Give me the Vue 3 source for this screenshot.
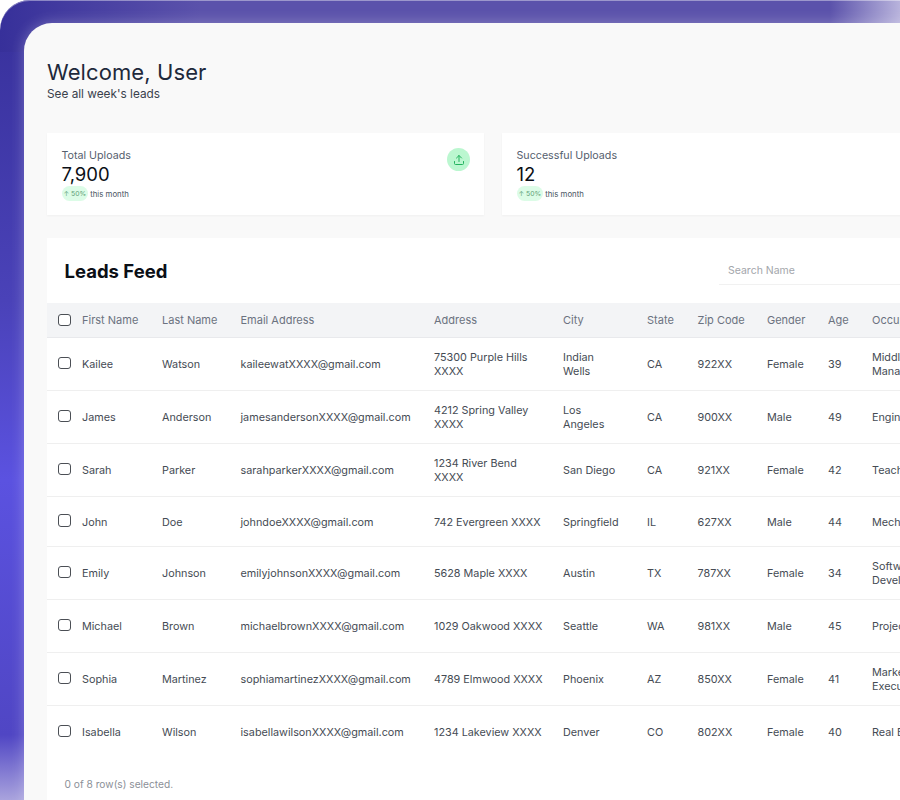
<script setup>
const columns = [
  "First Name",
  "Last Name",
  "Email Address",
  "Address",
  "City",
  "State",
  "Zip Code",
  "Gender",
  "Age",
  "Occupation",
];

const leads = [
  { first: "Kailee", last: "Watson", email: "kaileewatXXXX@gmail.com", address: "75300 Purple Hills XXXX", city: "Indian Wells", state: "CA", zip: "922XX", gender: "Female", age: 39, job: "Middle Manager" },
  { first: "James", last: "Anderson", email: "jamesandersonXXXX@gmail.com", address: "4212 Spring Valley XXXX", city: "Los Angeles", state: "CA", zip: "900XX", gender: "Male", age: 49, job: "Engineer" },
  { first: "Sarah", last: "Parker", email: "sarahparkerXXXX@gmail.com", address: "1234 River Bend XXXX", city: "San Diego", state: "CA", zip: "921XX", gender: "Female", age: 42, job: "Teacher" },
  { first: "John", last: "Doe", email: "johndoeXXXX@gmail.com", address: "742 Evergreen XXXX", city: "Springfield", state: "IL", zip: "627XX", gender: "Male", age: 44, job: "Mechanic", short: true },
  { first: "Emily", last: "Johnson", email: "emilyjohnsonXXXX@gmail.com", address: "5628 Maple XXXX", city: "Austin", state: "TX", zip: "787XX", gender: "Female", age: 34, job: "Software Developer" },
  { first: "Michael", last: "Brown", email: "michaelbrownXXXX@gmail.com", address: "1029 Oakwood XXXX", city: "Seattle", state: "WA", zip: "981XX", gender: "Male", age: 45, job: "Project Lead" },
  { first: "Sophia", last: "Martinez", email: "sophiamartinezXXXX@gmail.com", address: "4789 Elmwood XXXX", city: "Phoenix", state: "AZ", zip: "850XX", gender: "Female", age: 41, job: "Marketing Executive" },
  { first: "Isabella", last: "Wilson", email: "isabellawilsonXXXX@gmail.com", address: "1234 Lakeview XXXX", city: "Denver", state: "CO", zip: "802XX", gender: "Female", age: 40, job: "Real Estate" },
];

const stats = [
  { label: "Total Uploads", value: "7,900", icon: true },
  { label: "Successful Uploads", value: "12", icon: false },
];
</script>

<template>
  <div class="frame">
    <main class="panel">
      <h1>Welcome, User</h1>
      <p class="sub">See all week's leads</p>

      <section class="stats">
        <div v-for="s in stats" :key="s.label" class="stat">
          <div>
            <div class="stat-label">{{ s.label }}</div>
            <div class="stat-value">{{ s.value }}</div>
            <div class="stat-trend">
              <span class="pill">↑ 50%</span>
              <span>this month</span>
            </div>
          </div>
          <span v-if="s.icon" class="stat-icon">
            <svg width="12" height="12" viewBox="0 0 24 24" fill="none" stroke="currentColor" stroke-width="2" stroke-linecap="round" stroke-linejoin="round">
              <path d="M21 15v4a2 2 0 0 1-2 2H5a2 2 0 0 1-2-2v-4" />
              <polyline points="17 8 12 3 7 8" />
              <line x1="12" y1="3" x2="12" y2="15" />
            </svg>
          </span>
        </div>
      </section>

      <section class="feed">
        <div class="feed-head">
          <h2>Leads Feed</h2>
          <input class="search" placeholder="Search Name" />
        </div>
        <table>
          <colgroup>
            <col class="c-check" />
            <col class="c-first" />
            <col class="c-last" />
            <col class="c-email" />
            <col class="c-address" />
            <col class="c-city" />
            <col class="c-state" />
            <col class="c-zip" />
            <col class="c-gender" />
            <col class="c-age" />
            <col class="c-job" />
          </colgroup>
          <thead>
            <tr>
              <th><span class="box"></span></th>
              <th v-for="c in columns" :key="c">{{ c }}</th>
            </tr>
          </thead>
          <tbody>
            <tr v-for="l in leads" :key="l.email" :class="{ short: l.short }">
              <td><span class="box"></span></td>
              <td>{{ l.first }}</td>
              <td>{{ l.last }}</td>
              <td>{{ l.email }}</td>
              <td class="wrap-address">{{ l.address }}</td>
              <td class="wrap-city">{{ l.city }}</td>
              <td>{{ l.state }}</td>
              <td>{{ l.zip }}</td>
              <td>{{ l.gender }}</td>
              <td>{{ l.age }}</td>
              <td class="wrap-job">{{ l.job }}</td>
            </tr>
          </tbody>
        </table>
        <p class="selected">0 of 8 row(s) selected.</p>
      </section>
    </main>
  </div>
</template>

<style scoped>
* {
  box-sizing: border-box;
}

.frame {
  position: relative;
  width: 900px;
  height: 800px;
  overflow: hidden;
  padding: 22.5px 0 0 24px;
  border-top-left-radius: 30px;
  font-family: Inter, "Liberation Sans", sans-serif;
  background:
    linear-gradient(90deg, #37309a 0, #5b52ab 200px, #5b52ab 830px, #b8b3dc 900px) top / 100% 52px no-repeat,
    linear-gradient(180deg, #37309a 0, #4a42b8 300px, #5b52e0 480px, #5046c4 735px, #a9a3dd 800px) left / 52px 100% no-repeat;
}

/* thin light edge along the top of the frame */
.frame::after {
  content: "";
  position: absolute;
  inset: 0;
  border-top-left-radius: 30px;
  box-shadow: inset 0 1px 0 rgba(255, 255, 255, 0.4);
  pointer-events: none;
}

.panel {
  width: 1100px;
  height: 900px;
  padding: 36.5px 0 0 23px;
  background: #f9f9f9;
  border-top-left-radius: 28px;
  box-shadow: 0 0 14px rgba(255, 255, 255, 0.28);
}

h1 {
  margin: 0;
  font-size: 22px;
  line-height: 27px;
  font-weight: 400;
  letter-spacing: 0.1px;
  color: #1e293b;
}

.sub {
  margin: 0;
  font-size: 11.8px;
  line-height: 16px;
  color: #3a414c;
}

.stats {
  display: flex;
  gap: 18px;
  margin-top: 31px;
}

.stat {
  display: flex;
  justify-content: space-between;
  width: 437px;
  height: 82px;
  padding: 16px 14px 0 14.5px;
  background: #fff;
  box-shadow: 0 1px 2px rgba(0, 0, 0, 0.04);
}

.stat:last-child {
  width: 600px;
}

.stat-label {
  font-size: 10.7px;
  line-height: 14px;
  color: #55606e;
}

.stat-value {
  font-size: 18.5px;
  line-height: 23px;
  color: #0b0f16;
}

.stat-trend {
  display: flex;
  align-items: center;
  gap: 2px;
  font-size: 7.8px;
  color: #4b5563;
}

.pill {
  padding: 3px 2px;
  border-radius: 8px;
  font-size: 6.8px;
  line-height: 9px;
  color: #5f9f78;
  background: #dcfce7;
}

.stat-icon {
  display: flex;
  align-items: center;
  justify-content: center;
  width: 23px;
  height: 23px;
  margin-top: -1px;
  border-radius: 50%;
  color: #22b35e;
  background: #bbf7d0;
}

.feed {
  width: 1100px;
  margin-top: 23px;
  background: #fff;
}

.feed-head {
  display: flex;
  align-items: center;
  justify-content: space-between;
  height: 65px;
  padding-left: 17.5px;
  padding-right: 128px;
}

h2 {
  margin: 0;
  font-size: 18.5px;
  font-weight: 700;
  color: #0b0f16;
}

.search {
  width: 300px;
  height: 29px;
  padding: 0 9px;
  border: 0;
  border-bottom: 1px solid #f1f1f1;
  outline: 0;
  font: inherit;
  font-size: 10.5px;
  background: transparent;
}

.search::placeholder {
  color: #a3a6ab;
}

table {
  width: 913px;
  table-layout: fixed;
  border-collapse: collapse;
  font-size: 10.8px;
  line-height: 14.5px;
  color: #454b54;
}

.c-check { width: 35px; }
.c-first { width: 80px; }
.c-last { width: 78.5px; }
.c-email { width: 193.5px; }
.c-address { width: 129px; }
.c-city { width: 84px; }
.c-state { width: 50.5px; }
.c-zip { width: 69.5px; }
.c-gender { width: 61px; }
.c-age { width: 44px; }
.c-job { width: 88px; }

th {
  height: 34px;
  padding: 0 8px 0 0;
  font-size: 11px;
  font-weight: 400;
  text-align: left;
  white-space: nowrap;
  color: #6b7280;
  background: #f3f4f6;
  border-bottom: 1px solid #e8e9ec;
}

td {
  height: 53px;
  padding: 3.5px 8px 0 0;
  border-bottom: 1px solid #efefef;
}

tr.short td {
  height: 50px;
}

tbody tr:last-child td {
  border-bottom-color: transparent;
}

th:first-child,
td:first-child {
  padding-top: 0;
  padding-left: 11px;
}

td.wrap-address {
  padding-right: 16px;
}

td.wrap-city {
  padding-right: 26px;
}

td.wrap-job {
  padding-right: 16px;
}

.box {
  display: block;
  width: 12.5px;
  height: 12.5px;
  border: 1px solid #4b4f55;
  border-radius: 3px;
  background: #fff;
}

td .box {
  margin-top: -1px;
}

.selected {
  margin: 0;
  padding: 18px 0 60px 17.5px;
  font-size: 10.2px;
  line-height: 14px;
  color: #8b9097;
}
</style>
